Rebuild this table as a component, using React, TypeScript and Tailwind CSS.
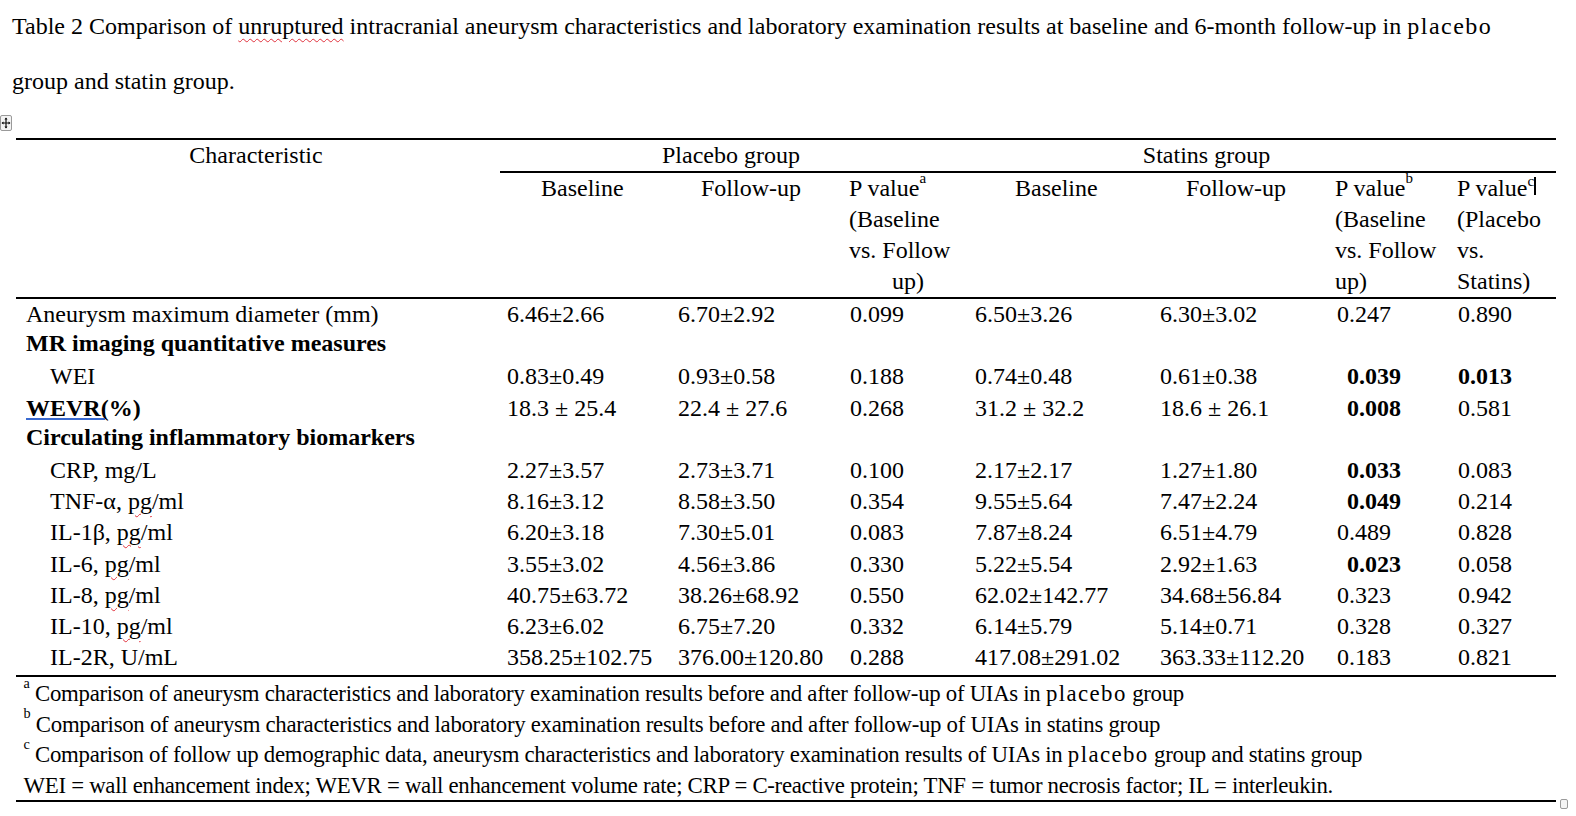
import React from "react";

type Row = {
  label: string;
  kind?: "section" | "sub" | "wevr";
  vals?: string[];
  bold?: number[];
};

const rows: Row[] = [
  {
    label: "Aneurysm maximum diameter (mm)",
    vals: ["6.46±2.66", "6.70±2.92", "0.099", "6.50±3.26", "6.30±3.02", "0.247", "0.890"],
  },
  { label: "MR imaging quantitative measures", kind: "section" },
  {
    label: "WEI",
    kind: "sub",
    vals: ["0.83±0.49", "0.93±0.58", "0.188", "0.74±0.48", "0.61±0.38", "0.039", "0.013"],
    bold: [5, 6],
  },
  {
    label: "WEVR(%)",
    kind: "wevr",
    vals: ["18.3 ± 25.4", "22.4 ± 27.6", "0.268", "31.2 ± 32.2", "18.6 ± 26.1", "0.008", "0.581"],
    bold: [5],
  },
  { label: "Circulating inflammatory biomarkers", kind: "section" },
  {
    label: "CRP, mg/L",
    kind: "sub",
    vals: ["2.27±3.57", "2.73±3.71", "0.100", "2.17±2.17", "1.27±1.80", "0.033", "0.083"],
    bold: [5],
  },
  {
    label: "TNF-α, |pg|/ml",
    kind: "sub",
    vals: ["8.16±3.12", "8.58±3.50", "0.354", "9.55±5.64", "7.47±2.24", "0.049", "0.214"],
    bold: [5],
  },
  {
    label: "IL-1β, |pg|/ml",
    kind: "sub",
    vals: ["6.20±3.18", "7.30±5.01", "0.083", "7.87±8.24", "6.51±4.79", "0.489", "0.828"],
  },
  {
    label: "IL-6, |pg|/ml",
    kind: "sub",
    vals: ["3.55±3.02", "4.56±3.86", "0.330", "5.22±5.54", "2.92±1.63", "0.023", "0.058"],
    bold: [5],
  },
  {
    label: "IL-8, |pg|/ml",
    kind: "sub",
    vals: ["40.75±63.72", "38.26±68.92", "0.550", "62.02±142.77", "34.68±56.84", "0.323", "0.942"],
  },
  {
    label: "IL-10, |pg|/ml",
    kind: "sub",
    vals: ["6.23±6.02", "6.75±7.20", "0.332", "6.14±5.79", "5.14±0.71", "0.328", "0.327"],
  },
  {
    label: "IL-2R, U/mL",
    kind: "sub",
    vals: ["358.25±102.75", "376.00±120.80", "0.288", "417.08±291.02", "363.33±112.20", "0.183", "0.821"],
  },
];

const Squiggle = ({ children }: { children: React.ReactNode }) => (
  <span className="underline decoration-wavy decoration-[#e0313c] decoration-1 underline-offset-[4px]">
    {children}
  </span>
);

const Label = ({ text }: { text: string }) => {
  const parts = text.split("|");
  return (
    <>
      {parts.map((p, i) => (i === 1 ? <Squiggle key={i}>{p}</Squiggle> : <span key={i}>{p}</span>))}
    </>
  );
};

const Wide = ({ children }: { children: React.ReactNode }) => (
  <span className="tracking-[1.5px]">{children}</span>
);

const Sup = ({ c }: { c: string }) => (
  <sup className="text-[15px] align-[6px] leading-none">{c}</sup>
);

const grid = "grid grid-cols-[484px_171px_172px_125px_185px_177px_121px_105px]";

export default function App() {
  return (
    <div className="relative w-[1576px] h-[816px] bg-white text-black font-['Liberation_Serif','Times_New_Roman',serif] text-[24px] overflow-hidden">
      {/* table move handle */}
      <div className="absolute left-0 top-[115px]">
        <svg width="12" height="16" viewBox="0 0 12 16">
          <rect x="0.5" y="0.5" width="11" height="15" rx="1.5" fill="#f4f4f4" stroke="#9a9a9a" />
          <path d="M6 3v10M2 8h8" stroke="#111" strokeWidth="1.2" />
          <path d="M6 2.5l-1.5 2h3zM6 13.5l-1.5-2h3zM1.5 8l2-1.5v3zM10.5 8l-2-1.5v3z" fill="#111" />
        </svg>
      </div>

      <p className="pl-[12px] -mt-[1px] leading-[55px]">
        Table 2 Comparison of <Squiggle>unruptured</Squiggle> intracranial aneurysm characteristics and laboratory
        examination results at baseline and 6-month follow-up in <Wide>placebo</Wide>
        <br />
        group and statin group.
      </p>

      <div className="ml-[16px] mt-[29px] w-[1540px]">
        <div className="border-t-2 border-black" />
        {/* header row 1 */}
        <div className={`${grid} h-[31px] leading-[31px]`}>
          <div className="text-center pr-[4px]">Characteristic</div>
          <div className="col-span-3 text-center pr-[6px]">Placebo group</div>
          <div className="col-span-3 text-center pr-[6px]">Statins group</div>
          <div />
        </div>
        <div className="ml-[484px] border-t-2 border-black" />
        {/* header row 2 */}
        <div className={`${grid} leading-[31px] h-[124px]`}>
          <div />
          <div className="pl-[41px]">Baseline</div>
          <div className="pl-[30px]">Follow-up</div>
          <div className="pl-[6px]">
            <div>
              P value<Sup c="a" />
            </div>
            <div>(Baseline</div>
            <div>vs. Follow</div>
            <div className="pl-[43px]">up)</div>
          </div>
          <div className="pl-[47px]">Baseline</div>
          <div className="pl-[33px]">Follow-up</div>
          <div className="pl-[5px]">
            <div>
              P value<Sup c="b" />
            </div>
            <div>(Baseline</div>
            <div>vs. Follow</div>
            <div>up)</div>
          </div>
          <div className="pl-[6px]">
            <div className="flex items-center">
              P value<Sup c="c" />
              <span className="inline-block w-[1.5px] h-[18px] bg-black -mt-[6px]" />
            </div>
            <div>(Placebo</div>
            <div>vs.</div>
            <div>Statins)</div>
          </div>
        </div>
        <div className="border-t-2 border-black" />
        {/* body */}
        <div className="pb-[2px]">
          {rows.map((r, ri) => (
            <div key={ri} className={`${grid} h-[31.2px] leading-[31.2px]`}>
              <div
                className={
                  r.kind === "section"
                    ? "pl-[10px] font-bold col-span-8 -mt-[2px]"
                    : r.kind === "sub"
                    ? "pl-[34px]"
                    : "pl-[10px]"
                }
              >
                {r.kind === "wevr" ? (
                  <span className="font-bold">
                    <span className="relative underline decoration-1 underline-offset-[3px]">
                      WEVR
                      <span className="absolute left-0 right-[-4px] bottom-[1px] h-[2px] bg-[#3a6ad0]" />
                    </span>
                    (%)
                  </span>
                ) : (
                  <Label text={r.label} />
                )}
              </div>
              {r.vals &&
                r.vals.map((v, vi) => {
                  const b = r.bold?.includes(vi);
                  return (
                    <div
                      key={vi}
                      className={`${b ? "font-bold" : ""} ${b && vi === 5 ? "pl-[17px]" : "pl-[7px]"}`}
                    >
                      {v}
                    </div>
                  );
                })}
            </div>
          ))}
        </div>
        <div className="border-t-2 border-black" />
        {/* footnotes */}
        <div className="pt-[1px] leading-[30.5px] tracking-[-0.3px] pl-[8px] scale-x-[0.95] origin-left">
          <div>
            <Sup c="a" /> Comparison of aneurysm characteristics and laboratory examination results before and after
            follow-up of UIAs in <Wide>placebo</Wide> group
          </div>
          <div>
            <Sup c="b" /> Comparison of aneurysm characteristics and laboratory examination results before and after
            follow-up of UIAs in statins group
          </div>
          <div>
            <Sup c="c" /> Comparison of follow up demographic data, aneurysm characteristics and laboratory
            examination results of UIAs in <Wide>placebo</Wide> group and statins group
          </div>
          <div>
            WEI = wall enhancement index; WEVR = wall enhancement volume rate; CRP = C-reactive protein; TNF = tumor
            necrosis factor; IL = interleukin.
          </div>
        </div>
        <div className="border-t-2 border-black" />
      </div>

      {/* resize handle */}
      <div className="absolute left-[1560px] top-[799px] w-[8px] h-[10px] border border-[#9a9a9a] rounded-[2px] bg-[#f4f4f4]" />
    </div>
  );
}
